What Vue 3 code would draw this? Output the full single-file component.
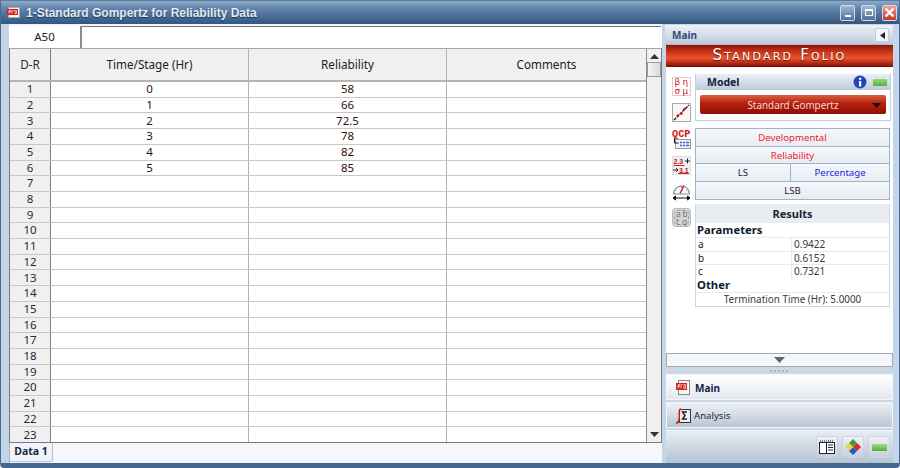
<script setup>
const rows = Array.from({ length: 23 }, (_, i) => {
  const t = ['0', '1', '2', '3', '4', '5'][i] ?? ''
  const r = ['58', '66', '72.5', '78', '82', '85'][i] ?? ''
  return { n: i + 1, t, r }
})
const params = [['a', '0.9422'], ['b', '0.6152'], ['c', '0.7321']]
</script>

<template>
  <div class="win">
    <header class="title">
      <svg class="appicon" width="13" height="11" viewBox="0 0 13 11">
        <rect x="1.500" y=".5" width="11" height="10" fill="#f4f4f4" stroke="#aaa" />
        <rect x="0" y="2" width="11" height="6" fill="#d42020" />
        <path d="M2 3.500v3M2 3.500h1.500v1.500H2M5 6.500v-3h1.500M8 3.500h1.500v3H8z" fill="none" stroke="#ffd9d9" stroke-width=".8" />
      </svg>
      <span class="title-text">1-Standard Gompertz for Reliability Data</span>
      <div class="winbtns">
        <span class="wb"><i class="min"></i></span>
        <span class="wb"><i class="max"></i></span>
        <span class="wb close">
          <svg width="11" height="11" viewBox="0 0 11 11"><path d="M1.500 1.500l8 8M9.500 1.500l-8 8" stroke="#fff" stroke-width="2.400" /></svg>
        </span>
      </div>
    </header>

    <div class="body">
      <section class="left">
        <div class="formula">
          <div class="cellref">A50</div>
          <div class="cellinput"></div>
        </div>
        <div class="sheetwrap">
          <div class="sheet">
            <div class="row head">
              <div class="c n">D-R</div>
              <div class="c">Time/Stage (Hr)</div>
              <div class="c">Reliability</div>
              <div class="c last">Comments</div>
            </div>
            <div v-for="row in rows" :key="row.n" class="row">
              <div class="c n">{{ row.n }}</div>
              <div class="c">{{ row.t }}</div>
              <div class="c">{{ row.r }}</div>
              <div class="c last"></div>
            </div>
          </div>
          <div class="scroll">
            <svg class="arrow" width="9" height="5" viewBox="0 0 9 5"><path d="M4.500 0L9 5H0z" fill="#333" /></svg>
            <div class="thumb"></div>
            <div class="grow"></div>
            <svg class="arrow down" width="9" height="5" viewBox="0 0 9 5"><path d="M4.500 5L9 0H0z" fill="#333" /></svg>
          </div>
        </div>
        <div class="tabs"><div class="tab">Data 1</div></div>
      </section>

      <aside class="right">
        <div class="mainhead">
          <span>Main</span>
          <span class="pin"><svg width="5" height="7" viewBox="0 0 5 7"><path d="M0 3.500L5 0v7z" fill="#222" /></svg></span>
        </div>
        <div class="banner">Standard Folio</div>

        <div class="content">
          <div class="tools">
            <svg class="tool" width="19" height="19" viewBox="0 0 19 19">
              <rect x=".5" y=".5" width="18" height="18" fill="#fff" stroke="#e6c8c8" />
              <text x="2.500" y="8.200" class="sym">β</text><text x="10.500" y="8.200" class="sym">η</text>
              <text x="2.500" y="17" class="sym">σ</text><text x="10.500" y="17" class="sym">μ</text>
            </svg>
            <svg class="tool" width="19" height="19" viewBox="0 0 19 19">
              <rect x=".5" y=".5" width="18" height="18" fill="#f8f8f8" stroke="#aaa" />
              <path d="M2 17L17 2" stroke="#111" stroke-width="1.300" stroke-dasharray="3 1" />
              <circle cx="6" cy="12.500" r="1.300" fill="#e01010" />
              <circle cx="9.500" cy="10.500" r="1.300" fill="#e01010" />
              <circle cx="12.500" cy="6" r="1.300" fill="#e01010" />
            </svg>
            <svg class="tool" width="19" height="20" viewBox="0 0 19 20">
              <rect x="3.500" y="10.500" width="15" height="9" fill="#eef3fb" stroke="#999" />
              <text x="0" y="8" class="qcp">QCP</text>
              <path d="M2.500 9v5h4" fill="none" stroke="#111" />
              <path d="M8 13.500h2M11 13.500h2M14 13.500h3M8 16.500h2M11 16.500h2M14 16.500h3" stroke="#3b5fc0" stroke-width="1.600" />
            </svg>
            <svg class="tool" width="19" height="19" viewBox="0 0 19 19">
              <rect x=".5" y=".5" width="18" height="18" fill="#f2f2f2" stroke="#ddd" />
              <text x="1.500" y="8" class="num">2.3</text>
              <path d="M13 5h5M15.500 2.500v5" stroke="#222" />
              <path d="M1.500 9.500h11M6 17.500h11" stroke="#c11" stroke-width=".9" />
              <path d="M1 14h5M4 12l2 2-2 2" fill="none" stroke="#222" />
              <text x="7" y="16.500" class="num">3.1</text>
            </svg>
            <svg class="tool" width="19" height="19" viewBox="0 0 19 19">
              <path d="M1.500 12a8 8 0 1 1 16 0" fill="#fff" stroke="#666" />
              <path d="M1.500 12h16" stroke="#888" />
              <path d="M3.500 8l1.500 1M9.500 4v2M15.500 8L14 9" stroke="#999" />
              <path d="M8 11.500l4-8" stroke="#d22" stroke-width="1.600" />
              <path d="M1 16h17M1 16l2.500-2v4zM18 16l-2.500-2v4z" fill="#111" stroke="#111" />
            </svg>
            <svg class="tool" width="19" height="19" viewBox="0 0 19 19">
              <rect x=".5" y=".5" width="18" height="18" rx="3" fill="#d6d6d6" stroke="#bbb" />
              <rect x="2.500" y="2.500" width="14" height="14" rx="3" fill="none" stroke="#999" stroke-dasharray="3 2" />
              <text x="4" y="9" class="gr">a</text><text x="10.500" y="9" class="gr">b</text>
              <text x="4" y="17" class="gr">t</text><text x="10" y="17" class="gr">q</text>
            </svg>
          </div>

          <div class="forms">
            <div class="model">
              <div class="modelhead">
                <b>Model</b>
                <svg width="14" height="14" viewBox="0 0 14 14">
                  <circle cx="7" cy="7" r="6.500" fill="#2246b8" />
                  <rect x="6" y="6" width="2.200" height="5.500" fill="#fff" />
                  <rect x="6" y="2.800" width="2.200" height="2" fill="#fff" />
                </svg>
                <span class="led"></span>
              </div>
              <div class="modelbody">
                <div class="dropdown">
                  <span>Standard Gompertz</span>
                  <svg width="9" height="5" viewBox="0 0 9 5"><path d="M0 0h9L4.500 5z" fill="#111" /></svg>
                </div>
              </div>
            </div>

            <div class="opts">
              <div class="opt red">Developmental</div>
              <div class="opt red">Reliability</div>
              <div class="optsplit">
                <div class="opt">LS</div>
                <div class="opt blue">Percentage</div>
              </div>
              <div class="opt">LSB</div>
            </div>

            <div class="results">
              <div class="rhead">Results</div>
              <div class="rsec">Parameters</div>
              <div v-for="p in params" :key="p[0]" class="rrow">
                <span class="rk">{{ p[0] }}</span>
                <span class="rv">{{ p[1] }}</span>
              </div>
              <div class="rsec">Other</div>
              <div class="rterm">Termination Time (Hr): 5.0000</div>
            </div>
          </div>
        </div>

        <div class="collapse">
          <svg width="11" height="6" viewBox="0 0 11 6"><path d="M0 0h11L5.500 6z" fill="#666" /></svg>
        </div>
        <div class="grip"><i v-for="d in 5" :key="d"></i></div>

        <div class="nav active">
          <svg width="14" height="15" viewBox="0 0 14 15">
            <rect x="2.500" y=".5" width="11" height="14" fill="#f6f6f6" stroke="#888" />
            <rect x="0" y="3" width="11" height="7" fill="#d42020" />
            <path d="M2 4.500v4M2 4.500h1.500v2H2M5 8.500v-4h1.500M8 4.500h1.500v4H8z" fill="none" stroke="#ffd9d9" stroke-width=".8" />
          </svg>
          <span>Main</span>
        </div>
        <div class="nav">
          <svg width="16" height="16" viewBox="0 0 16 16">
            <rect x="4.500" y="1.500" width="11" height="13" fill="#eee" stroke="#333" />
            <path d="M12 4H7.500l2.500 3.500L7.500 11H12" fill="none" stroke="#222" stroke-width="1.400" />
            <path d="M6 1C3 1 5 8 4 12c-.4 2-2 3-3 3" fill="none" stroke="#d01c1c" stroke-width="1.500" />
          </svg>
          <span>Analysis</span>
        </div>
        <div class="footer">
          <span class="fb">
            <svg width="16" height="14" viewBox="0 0 16 14">
              <rect x=".5" y="2.500" width="15" height="11" fill="#fff" stroke="#223" />
              <rect x=".5" y="2.500" width="7" height="11" fill="#fff" stroke="#223" />
              <path d="M9 5h5M9 7.500h5M9 10h5" stroke="#223" />
              <path d="M1 1h14" stroke="#223" stroke-dasharray="1 1" />
            </svg>
          </span>
          <span class="fb">
            <svg width="18" height="18" viewBox="0 0 18 18">
              <path d="M9 1l4 4-4 4-4-4z" fill="#3aa03a" />
              <path d="M13 5l4 4-4 4-4-4z" fill="#d42a2a" />
              <path d="M9 9l4 4-4 4-4-4z" fill="#2a55c8" />
              <path d="M5 5l4 4-4 4-4-4z" fill="#f2d23a" />
            </svg>
          </span>
          <span class="fb"><span class="fled"></span></span>
        </div>
      </aside>
    </div>
  </div>
</template>

<style>
html, body { margin: 0; padding: 0; overflow: hidden; }
</style>

<style scoped>
.win {
  width: 900px;
  height: 468px;
  box-sizing: border-box;
  display: flex;
  flex-direction: column;
  background: #c4d5e8;
  border: 1px solid #4a6a8f;
  border-top-color: #5b7ba0;
  border-bottom: 5px solid #45678e;
  border-bottom-left-radius: 4px;
  border-bottom-right-radius: 4px;
  font-family: "Noto Sans", "DejaVu Sans", sans-serif;
  font-size: 11.5px;
  color: #1a1a1a;
  overflow: hidden;
}
.title {
  height: 23px;
  flex: none;
  display: flex;
  align-items: center;
  padding-left: 6px;
  background: linear-gradient(#8ea9c6 0, #6286ad 30%, #32577f 100%);
}
.appicon { margin-right: 6px; }
.title-text {
  font-family: "Liberation Sans", Arial, sans-serif;
  font-weight: 700;
  font-size: 12px;
  color: #e4ebf3;
  text-shadow: 0 1px 1px #1b3553;
  white-space: nowrap;
}
.winbtns { margin-left: auto; display: flex; gap: 6px; padding-right: 2px; }
.wb {
  width: 15px;
  height: 16px;
  box-sizing: border-box;
  border: 1px solid #cfdbe8;
  border-radius: 2px;
  background: linear-gradient(#a2b8d0, #4f7198);
  display: flex;
  align-items: center;
  justify-content: center;
}
.min { width: 6px; height: 2px; background: #fff; margin-top: 7px; }
.max { width: 8px; height: 7px; border: 1px solid #fff; border-top-width: 2px; box-sizing: border-box; }
.close { background: linear-gradient(#f0a090, #c8342a); }

.body { flex: 1; min-height: 0; display: flex; padding-left: 8px; padding-right: 6px; gap: 3px; }

.left { width: 653px; flex: none; display: flex; flex-direction: column; padding-top: 2px; background: #f1f4fa; }
.formula { height: 22px; flex: none; display: flex; background: #fff; }
.cellref { width: 71px; text-align: center; line-height: 21px; color: #222; font-size: 11.500px; border-right: 2px solid #8c8c8c; }
.cellinput { flex: 1; border-top: 1px solid #777; margin-bottom: 2px; margin-right: 1px; }

.sheetwrap { height: 395px; flex: none; display: flex; border: 1px solid #7a7a7a; border-top-color: #a5a5a5; background: #f0f0f0; box-sizing: border-box; }
.sheet { width: 636px; flex: none; display: flex; flex-direction: column; background: #fff; border-right: 1px solid #8c8c8c; }
.row { flex: 1 1 0; min-height: 0; display: grid; grid-template-columns: 41px 198px 198px 1fr; border-bottom: 1px solid #c8c8c8; }
.row:last-child { border-bottom: 0; }
.row.head { flex: 0 0 31px; background: #f0f0f0; border-bottom: 2px solid #b4b4b4; }
.c {
  border-right: 1px solid #b4b4b4;
  display: flex;
  align-items: center;
  justify-content: center;
  color: #301010;
  font-size: 11.500px;
  line-height: 1;
  padding-bottom: 1px;
  box-sizing: border-box;
}
.c.last { border-right: 0; }
.head .c { color: #222; font-size: 11.700px; padding-bottom: 0; }
.c.n { background: #f0f0f0; color: #1f2a3a; border-right-color: #808080; }
.scroll { flex: 1; display: flex; flex-direction: column; align-items: center; }
.arrow { margin-top: 5px; flex: none; }
.arrow.down { margin: 0 0 5px; }
.thumb { width: 14px; height: 15px; margin-top: 3px; box-sizing: border-box; border: 1px solid #9a9a9a; background: linear-gradient(90deg, #f4f4f4, #dcdcdc); flex: none; }
.grow { flex: 1; }

.tabs { flex: 1; display: flex; background: #f4f7fc; border-left: 1px solid #9fb3c9; }
.tab {
  width: 42px;
  height: 18px;
  background: #f0f3f8;
  border-right: 1px solid #b5c2d2;
  border-bottom: 1px solid #b5c2d2;
  border-bottom-right-radius: 3px;
  font-weight: 700;
  font-size: 10.500px;
  line-height: 17px;
  text-align: center;
  color: #152a46;
}

.right { flex: 1; min-width: 0; display: flex; flex-direction: column; padding-top: 1px; background: #ccd7e4; }
.mainhead {
  height: 20px;
  flex: none;
  display: flex;
  align-items: center;
  justify-content: space-between;
  padding: 1px 4px 0 7px;
  background: linear-gradient(#eef2f8, #bfcbdb);
  border-bottom: 1px solid #aab8c9;
  box-sizing: border-box;
  font-weight: 700;
  color: #2d4a78;
  font-size: 10px;
}
.pin {
  width: 12px;
  height: 12px;
  background: #f3f5f9;
  border: 1px solid #c4ccd8;
  border-radius: 2px;
  display: flex;
  align-items: center;
  justify-content: center;
}
.banner {
  height: 22px;
  flex: none;
  margin-left: 1px;
  background: linear-gradient(#8a1408 0, #c9331a 30%, #e9542c 60%, #a01a0c 90%, #6c0e06 100%);
  color: #fff;
  font-family: "DejaVu Sans", sans-serif;
  font-variant: small-caps;
  font-size: 15px;
  letter-spacing: 2.200px;
  text-align: center;
  line-height: 20px;
  text-shadow: 0 1px 1px #5a0c04;
}
.content { flex: none; height: 286px; margin-left: 1px; background: #fff; display: flex; box-sizing: border-box; padding-top: 7px; }
.tools { width: 29px; flex: none; display: flex; flex-direction: column; align-items: center; padding: 3px 0 0 1px; gap: 7px; box-sizing: border-box; }
.tool { flex: none; }
.sym { font-size: 8.800px; fill: #d01818; font-family: "DejaVu Sans", sans-serif; }
.qcp { font-size: 10.300px; font-weight: 700; fill: #d01818; font-family: "Liberation Mono", monospace; }
.num { font-size: 7px; font-weight: 700; fill: #c11; font-family: "Liberation Sans", sans-serif; }
.gr { font-size: 8px; fill: #777; font-family: "DejaVu Sans", sans-serif; }

.forms { width: 196px; flex: none; display: flex; flex-direction: column; }
.model { height: 47px; flex: none; box-sizing: border-box; border: 1px solid #c2cfde; border-top: 0; display: flex; flex-direction: column; }
.modelhead {
  height: 16px;
  flex: none;
  display: flex;
  align-items: center;
  padding: 0 3px 0 11px;
  background: linear-gradient(#eaeff6, #bdcada);
  font-size: 10.500px;
  color: #14213d;
}
.modelhead b { margin-right: auto; }
.led { width: 14px; height: 7px; margin-left: 6px; background: linear-gradient(#9ad77d, #5cab44); }
.modelbody { flex: 1; padding: 5px 4px 0; }
.dropdown {
  height: 19px;
  border-radius: 2px;
  display: flex;
  align-items: center;
  justify-content: center;
  position: relative;
  color: #f8d8d0;
  font-size: 9.900px;
  background: linear-gradient(#d9603f 0, #b8200e 45%, #8e0e04 100%);
}
.dropdown svg { position: absolute; right: 5px; top: 8px; }

.opts { margin-top: 7px; flex: none; width: 195px; border: 1px solid #9fb3c9; box-sizing: border-box; }
.opt {
  height: 17.500px;
  box-sizing: border-box;
  line-height: 17.500px;
  text-align: center;
  background: linear-gradient(#f6f8fb, #e6ecf3);
  border-bottom: 1px solid #9fb3c9;
  font-size: 9.600px;
  color: #1c2430;
}
.opts > .opt:last-child { border-bottom: 0; }
.red { color: #f0202a; }
.blue { color: #2626e0; }
.optsplit { display: grid; grid-template-columns: 95px 1fr; }
.optsplit .opt:first-child { border-right: 1px solid #9fb3c9; }

.results { margin-top: 4px; flex: none; width: 195px; border: 1px solid #ccd6e2; border-top: 0; box-sizing: border-box; }
.rhead { height: 19px; line-height: 19px; background: #e9edf2; text-align: center; font-weight: 700; font-size: 11px; color: #1a2433; }
.rsec { height: 14px; line-height: 13px; font-weight: 700; font-size: 11.300px; padding-left: 1px; color: #111b2c; }
.rrow { height: 13.500px; display: grid; grid-template-columns: 96px 1fr; line-height: 13px; border-top: 1px solid #e6ebf1; font-size: 10px; box-sizing: border-box; }
.rk { padding-left: 2px; border-right: 1px solid #e6ebf1; }
.rv { padding-left: 2px; color: #3a3a3a; }
.rterm { height: 14px; line-height: 13px; text-align: center; border-top: 1px solid #e6ebf1; font-size: 9.900px; color: #3a3a3a; box-sizing: border-box; }

.collapse {
  height: 14px;
  flex: none;
  margin-left: 1px;
  box-sizing: border-box;
  border: 1px solid #a9a9a9;
  background: #f3f6fa;
  display: flex;
  align-items: center;
  justify-content: center;
}
.grip { height: 7px; flex: none; display: flex; align-items: center; justify-content: center; gap: 2px; }
.grip i { width: 2px; height: 2px; background: #aab8c9; }
.nav {
  height: 26px;
  flex: none;
  margin-bottom: 2px;
  margin-left: 1px;
  display: flex;
  align-items: center;
  gap: 3px;
  padding: 1px 0 0 8px;
  box-sizing: border-box;
  border: 1px solid #f2f5f9;
  background: linear-gradient(#eef1f6, #b9c6d6);
  font-size: 9.600px;
  color: #1e2c3f;
}
.nav.active { background: linear-gradient(#ffffff, #e2e8f0); font-weight: 700; color: #142340; font-size: 10px; gap: 5px; padding-left: 9px; }
.footer {
  flex: 1;
  margin-left: 1px;
  display: flex;
  justify-content: flex-end;
  align-items: center;
  gap: 4px;
  padding-right: 3px;
  background: linear-gradient(#e8edf3, #b6c3d4);
  border-top: 1px solid #f2f5f9;
}
.fb {
  width: 22px;
  height: 22px;
  box-sizing: border-box;
  border: 1px solid #c9d3df;
  border-radius: 2px;
  background: linear-gradient(#eef1f6, #c5d0dd);
  display: flex;
  align-items: center;
  justify-content: center;
}
.fled { width: 15px; height: 7px; background: linear-gradient(#a4da8a, #5cab44); }
</style>
